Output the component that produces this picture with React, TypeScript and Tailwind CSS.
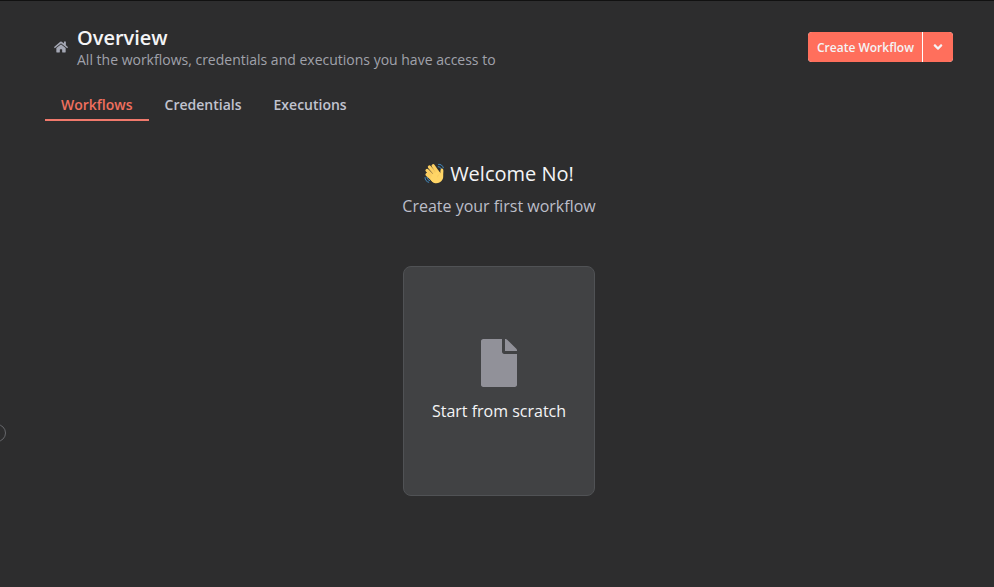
import React from 'react';
import { FaHome, FaFile, FaAngleDown } from 'react-icons/fa';

const tabs = ['Workflows', 'Credentials', 'Executions'];

function WavingHand() {
  return (
    <svg viewBox="0 0 62 62" className="mb-px h-[21px] w-[21px]" fill="none" strokeLinecap="round" role="img" aria-label="Waving hand">
      <path d="M43 4c6-1 12 3 14 10M42 11c4 0 7 2 9 6M3 43c0 7 4 12 11 14M9 42c1 6 4 9 8 10" stroke="#4596d1" strokeWidth="2.6" />
      <path d="M9 34l19 17M9 22l24 24M16 12l22 26M27 8l19 27" stroke="#fccf62" strokeWidth="9.5" />
      <path d="M24 34l18-12 6 8c1-8 0-13 4-14 5-1 6 5 5 12-1 8 1 14-2 20-4 9-13 13-22 12-7-1-12-7-14-12z" fill="#ffd566" />
      <path d="M13 30l8 7M15 20l11 12M24 15l9 12M48 31c-5 2-8 6-8 10" stroke="#ecbd58" strokeWidth="1" />
    </svg>
  );
}

export default function App() {
  return (
    <div className="relative h-[587px] w-[994px] overflow-hidden border-t border-[#111] bg-[#2d2d2e] font-['Open_Sans',sans-serif] text-[#f4f4f6]">
      <header className="flex h-[72px] items-start justify-between pl-[54px] pr-[41px] pt-[25px]">
        <div className="flex">
          <FaHome className="mt-3.5 h-3.5 w-3.5 text-[#a4a7b4]" />
          <div className="ml-[9px]">
            <h1 className="text-xl leading-6 font-semibold">Overview</h1>
            <p className="text-sm leading-5 text-[#a0a2ab]">All the workflows, credentials and executions you have access to</p>
          </div>
        </div>
        <div className="mt-1.5 flex h-[30px] overflow-hidden rounded bg-white text-xs font-semibold">
          <button className="w-[114px] bg-[#ff6f5c] pl-px pt-0.5">Create Workflow</button>
          <button aria-label="More options" className="ml-px flex w-[30px] items-center justify-center bg-[#ff6f5c]">
            <FaAngleDown className="h-3.5 w-3.5" />
          </button>
        </div>
      </header>
      <nav className="ml-[45px] mt-4 flex text-sm font-semibold">
        {tabs.map((t, i) => (
          <button key={t} className={i === 0 ? 'h-8 border-b-2 border-[#f0796c] px-4 pt-0.5 text-[#f0705f]' : 'h-8 border-b-2 border-transparent px-4 pt-0.5 text-[#c1c3cf]'}>{t}</button>
        ))}
      </nav>
      <main className="ml-1 flex flex-col items-center pt-10">
        <h2 className="flex items-center gap-[5px] text-xl leading-[26px]"><WavingHand /><span>Welcome No!</span></h2>
        <p className="mt-[7px] text-base leading-6 text-[#bcbec9]">Create your first workflow</p>
        <button className="mt-12 flex h-[230px] w-48 flex-col items-center rounded-lg border border-[#505255] bg-[#414244] pt-[72px]">
          <FaFile className="h-12 w-9 text-[#919199]" />
          <span className="mt-3 text-base leading-6">Start from scratch</span>
        </button>
      </main>
      <div className="absolute -left-3 top-[423px] h-[18px] w-[18px] rounded-full border border-[#66676b]" />
    </div>
  );
}
